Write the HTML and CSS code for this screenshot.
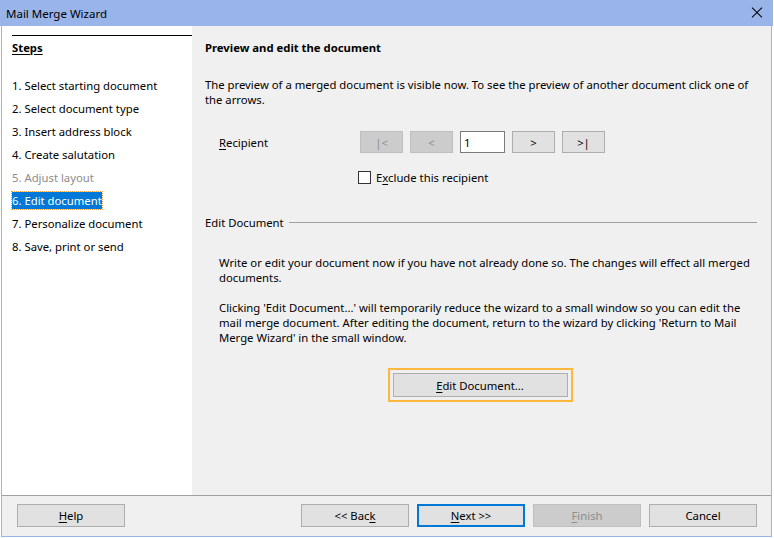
FILE: index.html
```html
<!DOCTYPE html>
<html lang="en">

<head>
    <meta charset="UTF-8">
    <title>Mail Merge Wizard</title>
    <link rel="stylesheet" href="styles.css">
</head>

<body>
    <div class="window">
        <div class="titlebar">
            <span class="title">Mail Merge Wizard</span>
            <button class="close"></button>
        </div>
        <div class="main">
            <div class="steps">
                <div class="steps-head"><u>Steps</u></div>
                <ul class="step-list">
                    <li>1. Select starting document</li>
                    <li>2. Select document type</li>
                    <li>3. Insert address block</li>
                    <li>4. Create salutation</li>
                    <li class="disabled">5. Adjust layout</li>
                    <li class="active"><span>6. Edit document</span></li>
                    <li>7. Personalize document</li>
                    <li>8. Save, print or send</li>
                </ul>
            </div>
            <div class="page">
                <h3 class="page-title">Preview and edit the document</h3>
                <p class="intro">The preview of a merged document is visible now. To see the preview of another document click one of the arrows.</p>
                <div class="recipient">
                    <label class="rec-label"><u>R</u>ecipient</label>
                    <div class="nav">
                        <button class="btn small" disabled>|&lt;</button>
                        <button class="btn small" disabled>&lt;</button>
                        <input class="num" type="text" value="1">
                        <button class="btn small">&gt;</button>
                        <button class="btn small">&gt;|</button>
                    </div>
                </div>
                <label class="check"><span class="box"></span><span>E<u>x</u>clude this recipient</span></label>

                <div class="section">
                    <span>Edit Document</span>
                    <div class="rule"></div>
                </div>
                <div class="section-body">
                    <p>Write or edit your document now if you have not already done so. The changes will effect all merged documents.</p>
                    <p>Clicking 'Edit Document...' will temporarily reduce the wizard to a small window so you can edit the mail merge document. After editing the document, return to the wizard by clicking 'Return to Mail Merge Wizard' in the small window.</p>
                    <div class="edit-wrap">
                        <div class="focus-ring">
                            <button class="btn edit"><u>E</u>dit Document...</button>
                        </div>
                    </div>
                </div>
            </div>
        </div>
        <div class="footer">
            <button class="btn wide"><u>H</u>elp</button>
            <div class="footer-right">
                <button class="btn wide">&lt;&lt; Bac<u>k</u></button>
                <button class="btn wide default"><u>N</u>ext &gt;&gt;</button>
                <button class="btn wide" disabled><u>F</u>inish</button>
                <button class="btn wide">Cancel</button>
            </div>
        </div>
    </div>
</body>

</html>
```

FILE: styles.css
```css
* {
    box-sizing: border-box;
}

body {
    margin: 0;
    background: #fff;
    font-family: "Noto Sans", "Open Sans", sans-serif;
    font-size: 11.3px;
    color: #000;
}

u {
    text-decoration: underline;
    text-underline-offset: 2px;
}

.window {
    width: 771px;
    height: 537px;
    margin-left: 1px;
    border: 1px solid #99b4e8;
    border-top: 0;
    display: flex;
    flex-direction: column;
    background: #f0f0f0;
}

.titlebar {
    height: 26px;
    margin: 0 -2px 0 -2px;
    background: #99b4e8;
    display: flex;
    align-items: center;
    padding-left: 6px;
}

.title {
    font-size: 11.5px;
}

.close {
    /* X drawn with two lines */
    margin-left: auto;
    margin-right: 8px;
    width: 16px;
    height: 16px;
    border: 0;
    background: transparent;
    position: relative;
}

.close::before,
.close::after {
    content: '';
    position: absolute;
    left: 1px;
    top: 7px;
    width: 14px;
    height: 1px;
    background: #000;
    transform: rotate(45deg);
}

.close::after {
    transform: rotate(-45deg);
}

.main {
    flex: 1;
    display: flex;
    border-bottom: 1px solid #a0a0a0;
}

.steps {
    flex: none;
    width: 190px;
    background: #fff;
    padding: 9px 0 0 10px;
}

.steps-head {
    border-top: 1px solid #000;
    padding-top: 4px;
    font-weight: bold;
    height: 39px;
}

.step-list {
    list-style: none;
    margin: 0;
    padding: 0;
}

.step-list li {
    height: 23px;
    line-height: 23px;
    white-space: nowrap;
}

.step-list li.disabled {
    color: #8d8d8d;
}

.step-list li.active span {
    background: #0078d7;
    color: #fff;
    outline: 1px dotted #f0a040;
    padding: 1px 0;
}

.page {
    flex: 1;
    min-width: 0;
    padding: 14px 14px 0 13px;
}

.page-title {
    margin: 0;
    font-size: 11.3px;
    font-weight: bold;
    line-height: 16px;
}

.intro {
    margin: 21px 0 0;
    line-height: 15px;
    max-width: 552px;
}

.recipient {
    display: flex;
    align-items: center;
    margin-top: 24px;
    padding-left: 14px;
}

.rec-label {
    width: 141px;
}

.nav {
    display: flex;
    gap: 7px;
}

.btn {
    font-family: inherit;
    font-size: 11.3px;
    color: #000;
    background: #e1e1e1;
    border: 1px solid #adadad;
    padding: 0;
    height: 23px;
}

.btn:disabled {
    background: #cccccc;
    border-color: #bfbfbf;
    color: #8d8d8d;
}

.btn.small {
    width: 43px;
    height: 22px;
}

.num {
    width: 45px;
    height: 22px;
    border: 1px solid #7a7a7a;
    background: #fff;
    font-family: inherit;
    font-size: 11.3px;
    padding: 0 3px;
    outline: none;
}

.check {
    display: flex;
    align-items: center;
    height: 16px;
    margin: 16px 0 0 153px;
    gap: 5px;
}

.box {
    width: 13px;
    height: 13px;
    border: 1px solid #333;
    background: #fff;
}

.section {
    display: flex;
    align-items: center;
    height: 16px;
    margin-top: 29px;
    gap: 5px;
}

.rule {
    flex: 1;
    height: 1px;
    background: #a0a0a0;
}

.section-body {
    padding-left: 14px;
}

.section-body p {
    margin: 25px 0 0;
    line-height: 15px;
    max-width: 540px;
}

.section-body p + p {
    margin-top: 15px;
}

.edit-wrap {
    display: flex;
    justify-content: center;
    margin-top: 23px;
    padding-right: 16px;
}

.focus-ring {
    border: 2px solid #ffb83d;
    padding: 3px;
}

.btn.edit {
    width: 175px;
    height: 24px;
}

.footer {
    height: 40px;
    display: flex;
    align-items: flex-start;
    padding: 8px 14px 0 15px;
}

.footer-right {
    margin-left: auto;
    display: flex;
    gap: 8px;
}

.btn.wide {
    width: 108px;
    height: 23px;
}

.btn.default {
    border: 2px solid #0078d7;
}
```
